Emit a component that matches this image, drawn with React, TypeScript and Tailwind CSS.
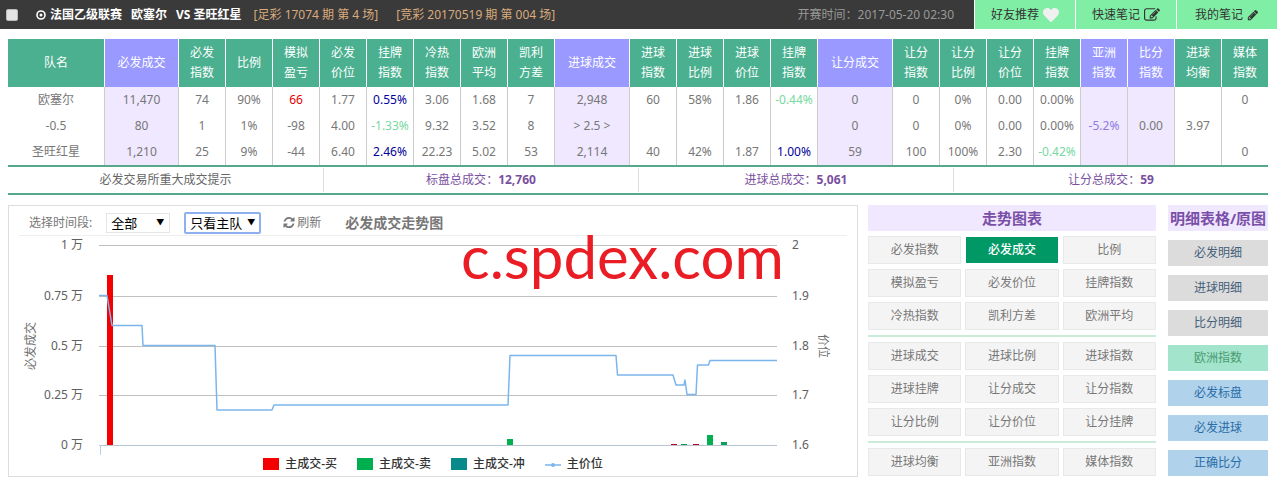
import { clsx } from "clsx";
import { FaHeart } from "react-icons/fa";

const purpleColumns = [1, 10, 15, 20, 21];

const columns = [
  { title: ["队名"], width: "w-[97px]" },
  { title: ["必发成交"], width: "w-[74px]" },
  { title: ["必发", "指数"], width: "w-[47px]" },
  { title: ["比例"], width: "w-[47px]" },
  { title: ["模拟", "盈亏"], width: "w-[47px]" },
  { title: ["必发", "价位"], width: "w-[47px]" },
  { title: ["挂牌", "指数"], width: "w-[47px]" },
  { title: ["冷热", "指数"], width: "w-[47px]" },
  { title: ["欧洲", "平均"], width: "w-[47px]" },
  { title: ["凯利", "方差"], width: "w-[47px]" },
  { title: ["进球成交"], width: "w-[75px]" },
  { title: ["进球", "指数"], width: "w-[47px]" },
  { title: ["进球", "比例"], width: "w-[47px]" },
  { title: ["进球", "价位"], width: "w-[47px]" },
  { title: ["挂牌", "指数"], width: "w-[47px]" },
  { title: ["让分成交"], width: "w-[75px]" },
  { title: ["让分", "指数"], width: "w-[47px]" },
  { title: ["让分", "比例"], width: "w-[47px]" },
  { title: ["让分", "价位"], width: "w-[47px]" },
  { title: ["挂牌", "指数"], width: "w-[47px]" },
  { title: ["亚洲", "指数"], width: "w-[47px]" },
  { title: ["比分", "指数"], width: "w-[47px]" },
  { title: ["进球", "均衡"], width: "w-[47px]" },
  { title: ["媒体", "指数"], width: "w-[46px]" },
];

const rows = [
  ["欧塞尔", "11,470", "74", "90%", "66", "1.77", "0.55%", "3.06", "1.68", "7", "2,948", "60", "58%", "1.86", "-0.44%", "0", "0", "0%", "0.00", "0.00%", "", "", "", "0"],
  ["-0.5", "80", "1", "1%", "-98", "4.00", "-1.33%", "9.32", "3.52", "8", "> 2.5 >", "", "", "", "", "0", "0", "0%", "0.00", "0.00%", "-5.2%", "0.00", "3.97", ""],
  ["圣旺红星", "1,210", "25", "9%", "-44", "6.40", "2.46%", "22.23", "5.02", "53", "2,114", "40", "42%", "1.87", "1.00%", "59", "100", "100%", "2.30", "-0.42%", "", "", "", "0"],
];

// listed price columns are coloured by sign, profit is red when positive
function cellColor(value: string, col: number) {
  if (col === 4 && !value.startsWith("-")) return "text-[#e60000]";
  if (col === 20) return "text-[#8f7be0]";
  if ([6, 14, 19].includes(col)) {
    if (value.startsWith("-")) return "text-[#77d9a0]";
    if (value !== "0.00%") return "text-[#00009c]";
  }
  return "text-[#777]";
}

const totals = [
  { label: "标盘总成交", value: "12,760" },
  { label: "进球总成交", value: "5,061" },
  { label: "让分总成交", value: "59" },
];

const chartGroups = [
  ["必发指数", "必发成交", "比例", "模拟盈亏", "必发价位", "挂牌指数", "冷热指数", "凯利方差", "欧洲平均"],
  ["进球成交", "进球比例", "进球指数", "进球挂牌", "让分成交", "让分指数", "让分比例", "让分价位", "让分挂牌"],
  ["进球均衡", "亚洲指数", "媒体指数"],
];

const detailLinks = [
  { label: "必发明细", color: "bg-[#dcdcdc] text-[#45607a]" },
  { label: "进球明细", color: "bg-[#dcdcdc] text-[#45607a]" },
  { label: "比分明细", color: "bg-[#dcdcdc] text-[#45607a]" },
  { label: "欧洲指数", color: "bg-[#a3e4cc] text-[#4a9a70]" },
  { label: "必发标盘", color: "bg-[#b0d2ea] text-[#2a6ca8]" },
  { label: "必发进球", color: "bg-[#b0d2ea] text-[#2a6ca8]" },
  { label: "正确比分", color: "bg-[#b0d2ea] text-[#2a6ca8]" },
];

const gridLines = [
  { y: 9, left: "1 万", right: "2" },
  { y: 60, left: "0.75 万", right: "1.9" },
  { y: 110, left: "0.5 万", right: "1.8" },
  { y: 159, left: "0.25 万", right: "1.7" },
  { y: 209, left: "0 万", right: "1.6" },
];

const bars = [
  { x: 98, height: 170, color: "#f40000" },
  { x: 498, height: 6, color: "#00b050" },
  { x: 662, height: 1, color: "#c00020" },
  { x: 672, height: 1, color: "#00a050" },
  { x: 684, height: 1, color: "#c00020" },
  { x: 698, height: 10, color: "#00b050" },
  { x: 712, height: 3, color: "#0a9f5a" },
];

const pricePoints =
  "90,59.5 98,59.5 103,89.5 133,89.5 134,109.5 206,109.5 208,174 263,174 265,169 499,169 501,119.5 607,119.5 608.5,139 664,139 667,149 675,149 676,144 678,158.5 687,158.5 688.5,129 699.5,129 701,124.5 768,124.5";

function PencilIcon() {
  return (
    <svg className="h-3 w-3" viewBox="0 0 1792 1792" fill="currentColor" aria-hidden="true">
      <path d="M491 1536l91-91-235-235-91 91v107h128v128h107zm523-928q0-22-22-22-10 0-17 7l-542 542q-7 7-7 17 0 22 22 22 10 0 17-7l542-542q7-7 7-17zm-54-192l416 416-832 832h-416v-416zm683 96q0 53-37 90l-166 166-416-416 166-165q36-38 90-38 53 0 91 38l235 234q37 39 37 91z" />
    </svg>
  );
}

function NoteIcon() {
  return (
    <svg className="h-4 w-4" viewBox="0 0 1792 1792" fill="currentColor" aria-hidden="true">
      <path d="M888 1184l116-116-152-152-116 116v56h96v96h56zm440-720q-16-16-33 1l-350 350q-17 17-1 33t33-1l350-350q17-17 1-33zm80 594v190q0 119-84.5 203.5t-203.5 84.5h-832q-119 0-203.5-84.5t-84.5-203.5v-832q0-119 84.5-203.5t203.5-84.5h832q63 0 117 25 15 7 18 23 3 17-9 29l-49 49q-14 14-32 8-23-6-45-6h-832q-66 0-113 47t-47 113v832q0 66 47 113t113 47h832q66 0 113-47t47-113v-126q0-13 9-22l64-64q15-15 35-7t20 29zm-96-738l288 288-672 672h-288v-288zm444 132l-92 92-288-288 92-92q28-28 68-28t68 28l152 152q28 28 28 68t-28 68z" />
    </svg>
  );
}

function RefreshIcon() {
  return (
    <svg className="h-3 w-3" viewBox="0 0 1536 1664" fill="currentColor" aria-hidden="true">
      <path d="M1511 928q0 5-1 7-64 268-268 434.500t-478 166.500q-146 0-282.500-55t-243.500-157l-129 129q-19 19-45 19t-45-19-19-45v-448q0-26 19-45t45-19h448q26 0 45 19t19 45-19 45l-137 137q71 66 161 102t187 36q134 0 250-65t186-179q11-17 53-117 8-23 30-23h192q13 0 22.500 9.500t9.500 22.500zm25-800v448q0 26-19 45t-45 19h-448q-26 0-45-19t-19-45 19-45l138-138q-148-137-349-137-134 0-250 65t-186 179q-11 17-53 117-8 23-30 23h-199q-13 0-22.500-9.500t-9.500-22.500v-7q65-268 270-434.500t480-166.500q146 0 284 55.500t245 156.500l130-129q19-19 45-19t45 19 19 45z" />
    </svg>
  );
}

function MatchHeader() {
  const action = "flex w-[100px] items-center justify-center gap-1 bg-[#80efa5] text-[#333]";
  return (
    <header className="flex h-[29px] bg-[#3a3a3a]">
      <div className="flex flex-1 items-center whitespace-nowrap pl-1.5 pr-5">
        <input
          type="checkbox"
          aria-label="法国乙级联赛"
          className="h-3 w-3 appearance-none rounded-xs border border-[#bbb] bg-[#e4e4e4]"
        />
        <svg className="ml-4.5 h-2.5 w-2.5 text-white" viewBox="0 0 10 10" aria-hidden="true">
          <circle cx="5" cy="5" r="4" fill="none" stroke="currentColor" strokeWidth="1.600" />
          <circle cx="5" cy="5" r="1.500" fill="currentColor" />
        </svg>
        <h1 className="ml-1 flex gap-[9px] font-bold text-white">
          <span>法国乙级联赛</span>
          <span>欧塞尔</span>
          <span>VS 圣旺红星</span>
        </h1>
        <span className="ml-3 text-[#d9ab7c]">[足彩 17074 期 第 4 场]</span>
        <span className="ml-[18px] text-[#d9ab7c]">[竞彩 20170519 期 第 004 场]</span>
        <time className="ml-auto text-[#999]">开赛时间：2017-05-20 02:30</time>
      </div>
      <nav className="flex gap-px bg-white pl-px">
        <a href="#recommend" className={action}>
          好友推荐 <FaHeart className="h-4 w-4 text-[#f0f0f0]" />
        </a>
        <a href="#quick-note" className={action}>
          快速笔记 <NoteIcon />
        </a>
        <a href="#notes" className={action}>
          我的笔记 <PencilIcon />
        </a>
      </nav>
    </header>
  );
}

function OddsTable() {
  return (
    <section>
      <div className="border-b-2 border-[#55a98a]">
        <table className="w-full table-fixed border-separate border-spacing-0 text-center">
          <thead>
            <tr className="h-12 text-white">
              {columns.map((column, i) => (
                <th
                  key={i}
                  scope="col"
                  className={clsx(
                    "border-r border-white p-0 font-normal leading-5 last:border-r-0",
                    column.width,
                    purpleColumns.includes(i) ? "bg-[#9999ff]" : "bg-[#4bb08f]"
                  )}
                >
                  {column.title.map((line) => (
                    <span key={line} className="block">{line}</span>
                  ))}
                </th>
              ))}
            </tr>
          </thead>
          <tbody>
            {rows.map((row) => (
              <tr key={row[0]} className="h-[26px]">
                {row.map((value, i) => (
                  <td
                    key={i}
                    className={clsx(
                      "whitespace-nowrap border-r border-[#ccc] p-0 leading-4 last:border-r-0",
                      cellColor(value, i),
                      purpleColumns.includes(i) && "bg-[#efe8ff]"
                    )}
                  >
                    {value}
                  </td>
                ))}
              </tr>
            ))}
          </tbody>
        </table>
      </div>

      {/* Totals */}
      <div className="grid grid-cols-4 border-b-2 border-[#55a98a] py-px text-center leading-6 text-[#7a4fa0]">
        <div className="text-[#666]">必发交易所重大成交提示</div>
        {totals.map((total) => (
          <div key={total.label} className="border-l border-[#ddd]">
            {total.label}：<strong>{total.value}</strong>
          </div>
        ))}
      </div>
    </section>
  );
}

function VolumeChart() {
  return (
    <svg className="block w-full overflow-visible" viewBox="0 0 848 220" role="img" aria-label="必发成交走势图">
      {gridLines.map((line) => (
        <g key={line.y} fill="#606060" fontSize="12">
          <rect x="90" y={line.y} width="678" height="1" fill={line.y === 209 ? "#b8c4d0" : "#c0c0c0"} />
          <text x="74" y={line.y + 4} textAnchor="end">{line.left}</text>
          <text x="783" y={line.y + 4}>{line.right}</text>
        </g>
      ))}
      <rect x="91" y="209" width="1" height="10" fill="#c0d0e0" />
      <text transform="translate(26 110) rotate(-90)" textAnchor="middle" fontSize="12" fill="#707070">必发成交</text>
      <text transform="translate(810 110) rotate(90)" textAnchor="middle" fontSize="12" fill="#707070">价位</text>
      {bars.map((bar) => (
        <rect key={bar.x} x={bar.x} y={209 - bar.height} width="6" height={bar.height} fill={bar.color} />
      ))}
      <polyline points={pricePoints} fill="none" stroke="#7cb5ec" strokeWidth="1.500" strokeLinejoin="round" />
      <text x="452" y="43" fontSize="60" fill="#ea1c24" className="font-['Lato',sans-serif]">c.spdex.com</text>
    </svg>
  );
}

function ChartPanel() {
  return (
    <section className="flex-1 border border-[#ddd]">
      <div className="mx-2.5 flex h-[30px] items-center border-b border-[#eee] pl-2.5 pt-1 text-[#777]">
        <label htmlFor="period">选择时间段:</label>
        <div className="relative ml-3.5">
          <select
            id="period"
            className="block h-5 w-16 appearance-none border border-[#e5e5e5] bg-white pl-1 text-[13px] leading-4 text-black"
          >
            <option>全部</option>
          </select>
          <span className="pointer-events-none absolute inset-y-0 right-1.5 flex items-center text-[8px] text-black">▼</span>
        </div>
        <div className="relative ml-3.5">
          <select
            aria-label="球队"
            className="block h-[22px] w-[77px] appearance-none rounded-xs border-2 border-[#8fb0ee] bg-white pl-1 text-[13px] leading-4 text-black"
          >
            <option>只看主队</option>
          </select>
          <span className="pointer-events-none absolute inset-y-0 right-1.5 flex items-center text-[8px] text-black">▼</span>
        </div>
        <button type="button" className="ml-[22px] flex items-center gap-0.5">
          <RefreshIcon /> 刷新
        </button>
        <h2 className="ml-6 text-sm font-bold">必发成交走势图</h2>
      </div>

      <VolumeChart />

      {/* Legend */}
      <ul className="flex justify-center gap-5 pb-1 font-medium leading-4 text-[#333]">
        <li className="flex items-center gap-1.5"><i className="h-3 w-4 bg-[#f40000]" />主成交-买</li>
        <li className="flex items-center gap-1.5"><i className="h-3 w-4 bg-[#00b050]" />主成交-卖</li>
        <li className="flex items-center gap-1.5"><i className="h-3 w-4 bg-[#088a8a]" />主成交-冲</li>
        <li className="flex items-center gap-1.5">
          <svg className="h-3 w-4" viewBox="0 0 16 12" aria-hidden="true">
            <path d="M0 7H16" stroke="#7cb5ec" strokeWidth="1.500" />
            <circle cx="8" cy="7" r="2" fill="#7cb5ec" />
          </svg>
          主价位
        </li>
      </ul>
    </section>
  );
}

export default function App() {
  const title = "bg-[#efe8ff] text-center text-[15px] font-bold leading-[26px] text-[#7a4fa8]";
  return (
    <div className="bg-white font-['Noto_Sans','Noto_Sans_CJK_SC',sans-serif] text-xs">
      <MatchHeader />
      <main className="pl-2 pr-[9px] pt-2.5">
        <OddsTable />
        <div className="mt-2.5 flex">
          <ChartPanel />

          <section className="ml-2.5 flex w-72 flex-col gap-[5px]">
            <h2 className={title}>走势图表</h2>
            {chartGroups.map((group, i) => (
              <div
                key={i}
                className={clsx("grid grid-cols-3 gap-x-1 gap-y-[5px]", i > 0 && "border-t-2 border-[#c9ecd9] pt-[5px]")}
              >
                {group.map((name) => (
                  <button
                    key={name}
                    type="button"
                    className={clsx(
                      "h-7 border",
                      name === "必发成交"
                        ? "border-white bg-[#009966] font-medium text-white"
                        : "border-[#e8e8e8] bg-[#f4f4f4] text-[#777]"
                    )}
                  >
                    {name}
                  </button>
                ))}
              </div>
            ))}
          </section>

          <section className="ml-3 flex w-[100px] flex-col gap-[9px]">
            <h2 className={clsx(title, "whitespace-nowrap")}>明细表格/原图</h2>
            {detailLinks.map((link) => (
              <a key={link.label} href="#detail" className={clsx("h-[26px] text-center leading-[26px]", link.color)}>
                {link.label}
              </a>
            ))}
          </section>
        </div>
      </main>
    </div>
  );
}
